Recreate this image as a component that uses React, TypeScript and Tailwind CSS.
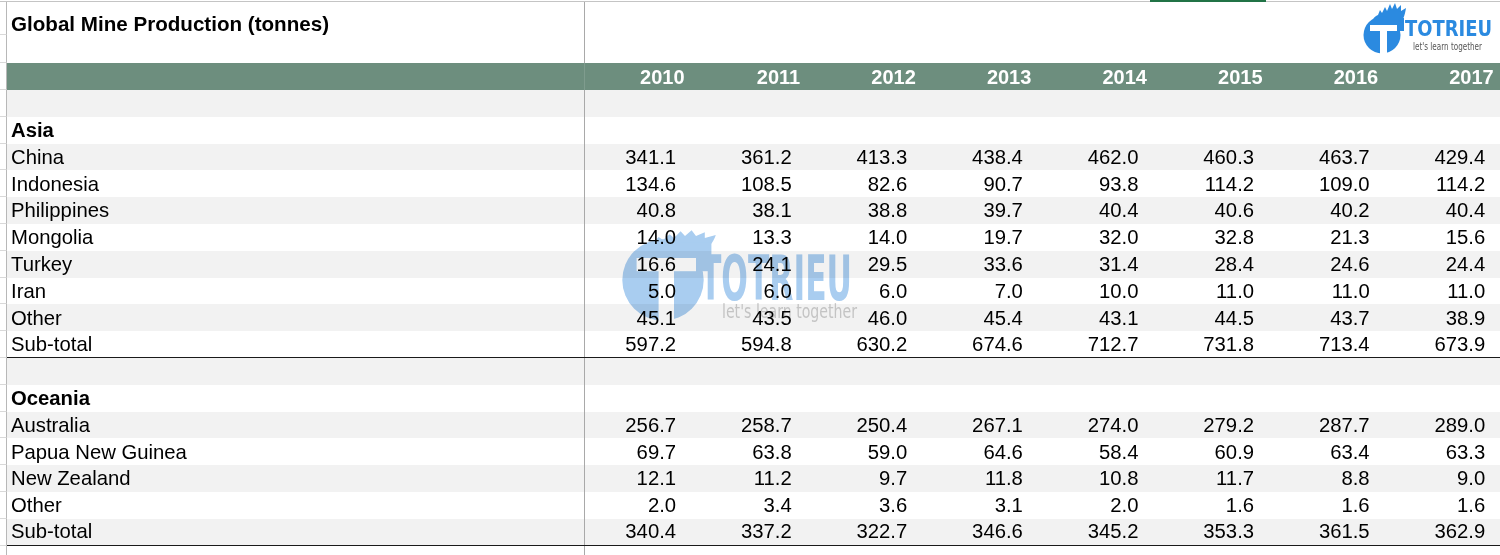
import React from "react";

const years = [2010, 2011, 2012, 2013, 2014, 2015, 2016, 2017];

type Row =
  | { kind: "blank" }
  | { kind: "section"; label: string }
  | { kind: "data" | "subtotal"; label: string; values: string[] };

const rows: Row[] = [
  { kind: "blank" },
  { kind: "section", label: "Asia" },
  { kind: "data", label: "China", values: ["341.1", "361.2", "413.3", "438.4", "462.0", "460.3", "463.7", "429.4"] },
  { kind: "data", label: "Indonesia", values: ["134.6", "108.5", "82.6", "90.7", "93.8", "114.2", "109.0", "114.2"] },
  { kind: "data", label: "Philippines", values: ["40.8", "38.1", "38.8", "39.7", "40.4", "40.6", "40.2", "40.4"] },
  { kind: "data", label: "Mongolia", values: ["14.0", "13.3", "14.0", "19.7", "32.0", "32.8", "21.3", "15.6"] },
  { kind: "data", label: "Turkey", values: ["16.6", "24.1", "29.5", "33.6", "31.4", "28.4", "24.6", "24.4"] },
  { kind: "data", label: "Iran", values: ["5.0", "6.0", "6.0", "7.0", "10.0", "11.0", "11.0", "11.0"] },
  { kind: "data", label: "Other", values: ["45.1", "43.5", "46.0", "45.4", "43.1", "44.5", "43.7", "38.9"] },
  { kind: "subtotal", label: "Sub-total", values: ["597.2", "594.8", "630.2", "674.6", "712.7", "731.8", "713.4", "673.9"] },
  { kind: "blank" },
  { kind: "section", label: "Oceania" },
  { kind: "data", label: "Australia", values: ["256.7", "258.7", "250.4", "267.1", "274.0", "279.2", "287.7", "289.0"] },
  { kind: "data", label: "Papua New Guinea", values: ["69.7", "63.8", "59.0", "64.6", "58.4", "60.9", "63.4", "63.3"] },
  { kind: "data", label: "New Zealand", values: ["12.1", "11.2", "9.7", "11.8", "10.8", "11.7", "8.8", "9.0"] },
  { kind: "data", label: "Other", values: ["2.0", "3.4", "3.6", "3.1", "2.0", "1.6", "1.6", "1.6"] },
  { kind: "subtotal", label: "Sub-total", values: ["340.4", "337.2", "322.7", "346.6", "345.2", "353.3", "361.5", "362.9"] },
];

const logoFont = "'DejaVu Sans Condensed', 'DejaVu Sans', 'Liberation Sans', sans-serif";

// circle + T + flame, drawn around a circle at (22, 35) r 18.5
function Mark({ fill, flame = 1 }: { fill: string; flame?: number }) {
  return (
    <>
      <g transform={`translate(0 ${20 * (1 - flame)}) scale(1 ${flame})`}>
        <path
          d="M11 25 C12 19 15 16 18 15 L20 10 L22 13 L25 7 L27 11 L30 4 L32 9 L35 3 L37 9 L41 5 L41 11 L46 8 C45 14 44 19 40 23 Z"
          fill={fill}
        />
      </g>
      <circle cx="22" cy="35" r="18.5" fill={fill} />
      <rect x="22" y="18" width="22" height="13" fill={fill} />
      <rect x="10" y="25" width="27" height="6" fill="#ffffff" />
      <rect x="20" y="25" width="7" height="29.5" fill="#ffffff" />
    </>
  );
}

function Logo() {
  return (
    <svg viewBox="0 0 135 56" width="135" height="56">
      <Mark fill="#2b8ae0" />
      <text
        x="45"
        y="36"
        fontFamily={logoFont}
        fontWeight="700"
        fontSize="21"
        textLength="87"
        lengthAdjust="spacingAndGlyphs"
        fill="#2b8ae0"
      >
        TOTRIEU
      </text>
      <text
        x="53"
        y="50"
        fontFamily={logoFont}
        fontSize="11"
        textLength="69"
        lengthAdjust="spacingAndGlyphs"
        fill="#555555"
      >
        let's learn together
      </text>
    </svg>
  );
}

function Watermark() {
  return (
    <svg viewBox="0 0 270 130" width="270" height="130">
      <g transform="translate(14.6 3) scale(2.2)">
        <Mark fill="#a9cdf0" flame={0.45} />
      </g>
      <text
        x="100"
        y="100"
        fontFamily={logoFont}
        fontWeight="700"
        fontSize="62"
        textLength="152"
        lengthAdjust="spacingAndGlyphs"
        fill="#a9cdf0"
      >
        TOTRIEU
      </text>
      <text
        x="122"
        y="118"
        fontFamily={logoFont}
        fontSize="19"
        textLength="135"
        lengthAdjust="spacingAndGlyphs"
        fill="#cfcfcf"
      >
        let's learn together
      </text>
    </svg>
  );
}

function Gutter({ h }: { h: string }) {
  return <div className={`w-[7px] shrink-0 border-r border-b border-r-[#b8b8b8] border-b-[#d9d9d9] bg-white ${h}`} />;
}

export default function App() {
  return (
    <div className="relative w-[1500px] h-[555px] overflow-hidden bg-white font-['Liberation_Sans',Arial,sans-serif] text-[20.3px] text-black">
      {/* top strip */}
      <div className="flex h-[2px]">
        <div className="w-[1150px] border-b border-[#c4c4c4]" />
        <div className="w-[116px] bg-[#217346]" />
        <div className="flex-1 border-b border-[#c4c4c4]" />
      </div>

      {/* title */}
      <div className="flex h-[61px]">
        <div className="flex flex-col">
          <Gutter h="h-[33px]" />
          <Gutter h="h-[28px]" />
        </div>
        <div className="w-[578px] shrink-0 border-r border-[#a9a9a9] pl-[4px] pt-[9px] text-[20.6px] font-bold leading-[26px]">
          Global Mine Production (tonnes)
        </div>
        <div className="flex-1" />
      </div>

      {/* header */}
      <div className="flex h-[27px]">
        <Gutter h="h-[27px]" />
        <div className="w-[578px] shrink-0 border-r border-[#7f9c8e] bg-[#6d8e7e]" />
        {years.map((y) => (
          <div
            key={y}
            className="flex w-[115.6px] shrink-0 items-center justify-end bg-[#6d8e7e] pr-[16px] text-[20px] font-bold text-white"
          >
            {y}
          </div>
        ))}
      </div>

      {/* body */}
      {rows.map((r, i) => {
        const bg = i % 2 === 0 ? "bg-[#f2f2f2]" : "bg-white";
        const line = r.kind === "subtotal" ? "border-b-[1.5px] border-b-[#1a1a1a]" : "";
        return (
          <div key={i} className="flex h-[26.8px]">
            <Gutter h="h-[26.8px]" />
            <div className={`flex flex-1 ${bg} ${line}`}>
              <div
                className={`flex w-[578px] shrink-0 items-center border-r border-r-[#a9a9a9] pl-[4px] ${
                  r.kind === "section" ? "font-bold" : ""
                }`}
              >
                {r.kind !== "blank" ? r.label : ""}
              </div>
              {years.map((y, j) => (
                <div key={y} className="flex w-[115.6px] shrink-0 items-center justify-end pr-[24.5px]">
                  {r.kind === "data" || r.kind === "subtotal" ? r.values[j] : ""}
                </div>
              ))}
            </div>
          </div>
        );
      })}

      {/* tail */}
      <div className="flex h-[10px]">
        <Gutter h="h-[10px]" />
        <div className="w-[578px] shrink-0 border-r border-[#a9a9a9]" />
      </div>

      {/* logo top right */}
      <div className="absolute left-[1360px] top-0">
        <Logo />
      </div>

      {/* watermark */}
      <div className="pointer-events-none absolute left-[600px] top-[200px] mix-blend-multiply">
        <Watermark />
      </div>
    </div>
  );
}
